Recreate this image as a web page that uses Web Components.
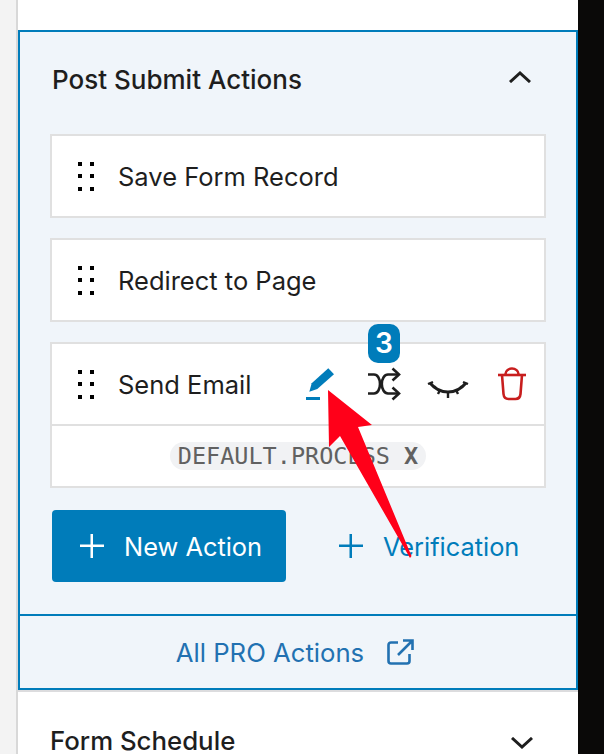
<!DOCTYPE html>
<html>
<head>
<meta charset="utf-8">
<style>
	html, body { margin: 0; height: 100%; overflow: hidden; background: #0a0908; }
	body { font-family: Inter, "Liberation Sans", sans-serif; color: #1e1e1e; }
</style>
</head>
<body>
<fb-sidebar>
	<fb-panel title="Post Submit Actions">
		<fb-action-row label="Save Form Record"></fb-action-row>
		<fb-action-row label="Redirect to Page"></fb-action-row>
		<fb-action-row label="Send Email" tools>
			<fb-tag name="DEFAULT.PROCESS"></fb-tag>
		</fb-action-row>
		<fb-panel-buttons slot="buttons"></fb-panel-buttons>
		<fb-pro-link slot="footer">All PRO Actions</fb-pro-link>
	</fb-panel>
	<fb-closed-panel title="Form Schedule"></fb-closed-panel>
</fb-sidebar>
<fb-arrow></fb-arrow>

<script>
customElements.define('fb-sidebar', class extends HTMLElement
{
	connectedCallback()
	{
		this.attachShadow({ mode: 'open' }).innerHTML = `
			<style>
				:host {
					display: block;
					box-sizing: border-box;
					width: 562px;
					height: 754px;
					padding-top: 30px;
					overflow: hidden;
					background: #fff;
					border-left: 2px solid #d8d8d8;
					margin-left: 16px;
					box-shadow: -16px 0 0 #f3f3f3;
				}
			</style>
			<slot></slot>
		`;
	}
});

customElements.define('fb-panel', class extends HTMLElement
{
	connectedCallback()
	{
		this.attachShadow({ mode: 'open' }).innerHTML = `
			<style>
				:host {
					display: block;
					background: #f0f5fa;
					border: 2px solid #007cba;
					box-shadow: 0 2px 0 #dcdcde;
				}
				header {
					height: 102px;
					box-sizing: border-box;
					display: flex;
					align-items: center;
					justify-content: space-between;
					padding: 0 44px 8px 32px;
					font-size: 26px;
					font-weight: 500;
				}
				svg { display: block; margin-bottom: 5px; }
				.rows {
					display: flex;
					flex-direction: column;
					gap: 20px;
					padding: 0 30px;
				}
				footer {
					height: 72px;
					border-top: 2px solid #007cba;
				}
			</style>
			<header>
				<span>${this.getAttribute('title')}</span>
				<svg width="24" height="12" viewBox="0 0 24 12" fill="none" stroke="#1e1e1e" stroke-width="3"><path d="M2 11 12 2l10 9"/></svg>
			</header>
			<div class="rows"><slot></slot></div>
			<slot name="buttons"></slot>
			<footer><slot name="footer"></slot></footer>
		`;
	}
});

customElements.define('fb-action-row', class extends HTMLElement
{
	connectedCallback()
	{
		const tools = this.hasAttribute('tools') ? `
			<div class="tools">
				<svg class="pencil" width="32" height="34" viewBox="0 0 32 34">
					<path fill="#007cba" d="M5.300 25.700 7.700 17.300 24.300 2.300 30 8.300 13.300 23z"/>
					<path fill="#007cba" d="M2 31h14v3H2z"/>
				</svg>
				<span class="shuffle">
					<b>3</b>
					<svg width="34" height="34" viewBox="0 0 34 34" fill="none" stroke="#1e1e1e" stroke-width="2.600">
						<path d="M1 7.500h6c3.500 0 6 4 6 9.500s-2.500 9.500-6 9.500H1"/>
						<path d="M32 7.500H21c-3.500 0-6.200 4-6.200 9.500s2.700 9.500 6.200 9.500h11"/>
						<path d="M25.500 1.500l6.500 6-6.500 6M25.500 20.500l6.500 6-6.500 6"/>
					</svg>
				</span>
				<svg class="eye" width="42" height="20" viewBox="0 0 42 20" fill="none" stroke="#1e1e1e" stroke-width="2.400">
					<path stroke-width="3" d="M3 4c5 6 10 9 18 9s13-3 18-9"/>
					<path d="M1 5l5-2M41 5l-5-2M9 9 7 7M33 9l2-2M13 11l-2 4M29 11l2 4M21 13v6"/>
				</svg>
				<svg class="trash" width="30" height="34" viewBox="0 0 30 34" fill="none" stroke="#c81e1e" stroke-width="2.600">
					<path d="M1 8h28"/>
					<path d="M8.500 8V7c0-3 3-5.500 6.500-5.500S21.500 4 21.500 7v1"/>
					<path d="M5 8l1.500 19c.3 3 2 5 5 5h7c3 0 4.700-2 5-5L25 8"/>
				</svg>
			</div>` : '';

		this.attachShadow({ mode: 'open' }).innerHTML = `
			<style>
				:host {
					display: block;
					background: #fff;
					border: 2px solid #e0e0e0;
				}
				.main {
					height: 80px;
					display: flex;
					align-items: center;
					font-size: 25.500px;
				}
				.grip {
					display: grid;
					grid-template-columns: 4px 4px;
					grid-template-rows: 4px 4px 4px;
					column-gap: 8px;
					row-gap: 8.500px;
					margin: 0 24px 0 26px;
				}
				.grip i { background: #000; }
				.tools {
					margin-left: auto;
					display: flex;
					align-items: center;
					padding-right: 17px;
				}
				.tools svg { display: block; }
				.pencil { margin: 0 31px 2px 0; }
				.eye { margin: 10px 28px 0 26px; }
				.shuffle { position: relative; display: block; }
				.shuffle b {
					position: absolute;
					left: 1px;
					top: -43px;
					width: 32px;
					height: 39px;
					border-radius: 10px;
					background: #007cba;
					color: #fff;
					font-size: 28px;
					font-weight: 600;
					line-height: 39px;
					text-align: center;
				}
				.below {
					display: flex;
					justify-content: center;
					align-items: center;
					height: 60px;
					border-top: 2px solid #e0e0e0;
				}
				.below[hidden] { display: none; }
			</style>
			<div class="main">
				<div class="grip"><i></i><i></i><i></i><i></i><i></i><i></i></div>
				<span>${this.getAttribute('label')}</span>
				${tools}
			</div>
			<div class="below" ${this.children.length ? '' : 'hidden'}><slot></slot></div>
		`;
	}
});

customElements.define('fb-tag', class extends HTMLElement
{
	connectedCallback()
	{
		this.attachShadow({ mode: 'open' }).innerHTML = `
			<style>
				:host {
					display: block;
					height: 28px;
					padding: 0 8px;
					border-radius: 14px;
					background: #f1f2f4;
					color: #616161;
					font: 23.500px/28px "DejaVu Sans Mono", monospace;
				}
			</style>
			${this.getAttribute('name')} <b>X</b>
		`;
	}
});

customElements.define('fb-panel-buttons', class extends HTMLElement
{
	connectedCallback()
	{
		const plus = `<svg width="24" height="24" viewBox="0 0 24 24"><path fill="currentColor" d="M10.500 0h2.500v10.500H24V13H13v11h-2.500V13H0v-2.500h10.500z"/></svg>`;

		this.attachShadow({ mode: 'open' }).innerHTML = `
			<style>
				:host {
					display: flex;
					align-items: center;
					padding: 22px 0 32px 32px;
					font-size: 25.400px;
				}
				a {
					display: flex;
					align-items: center;
					height: 72px;
					box-sizing: border-box;
				}
				.primary {
					width: 234px;
					padding-left: 28px;
					gap: 20px;
					background: #007cba;
					color: #fff;
					border-radius: 4px;
				}
				.ghost {
					margin-left: 53px;
					gap: 20px;
					color: #007cba;
				}
				svg { display: block; flex: none; }
			</style>
			<a class="primary">${plus}<span>New Action</span></a>
			<a class="ghost">${plus}<span>Verification</span></a>
		`;
	}
});

customElements.define('fb-pro-link', class extends HTMLElement
{
	connectedCallback()
	{
		this.attachShadow({ mode: 'open' }).innerHTML = `
			<style>
				:host {
					display: flex;
					align-items: center;
					justify-content: center;
					gap: 23px;
					height: 72px;
					padding-right: 6px;
					color: #2271b1;
					font-size: 25.700px;
				}
				svg { display: block; }
			</style>
			<span><slot></slot></span>
			<svg width="27" height="26" viewBox="0 0 27 26" fill="none" stroke="#2271b1" stroke-width="2.600">
				<path d="M11 3.500H4C2.500 3.500 1.500 4.500 1.500 6v16c0 1.500 1 2.500 2.500 2.500h16c1.500 0 2.500-1 2.500-2.500v-7"/>
				<path d="M11 16 25 2M16 1.500h9.500V11"/>
			</svg>
		`;
	}
});

customElements.define('fb-closed-panel', class extends HTMLElement
{
	connectedCallback()
	{
		this.attachShadow({ mode: 'open' }).innerHTML = `
			<style>
				:host {
					display: flex;
					align-items: center;
					justify-content: space-between;
					padding: 35px 44px 0 32px;
					font-size: 25.800px;
					font-weight: 500;
				}
				svg { display: block; margin-top: 4px; }
			</style>
			<span>${this.getAttribute('title')}</span>
			<svg width="24" height="12" viewBox="0 0 24 12" fill="none" stroke="#1e1e1e" stroke-width="3"><path d="M2 1l10 9 10-9"/></svg>
		`;
	}
});

// the red annotation arrow, lies over the panel
customElements.define('fb-arrow', class extends HTMLElement
{
	connectedCallback()
	{
		this.attachShadow({ mode: 'open' }).innerHTML = `
			<style>
				:host { position: absolute; left: 0; top: 0; pointer-events: none; }
				svg { display: block; }
			</style>
			<svg width="604" height="754" viewBox="0 0 604 754">
				<path fill="#ff0019" d="M328 390 372 425 358 427 411.500 556 410 558 340 436 329 447z"/>
			</svg>
		`;
	}
});
</script>
</body>
</html>
